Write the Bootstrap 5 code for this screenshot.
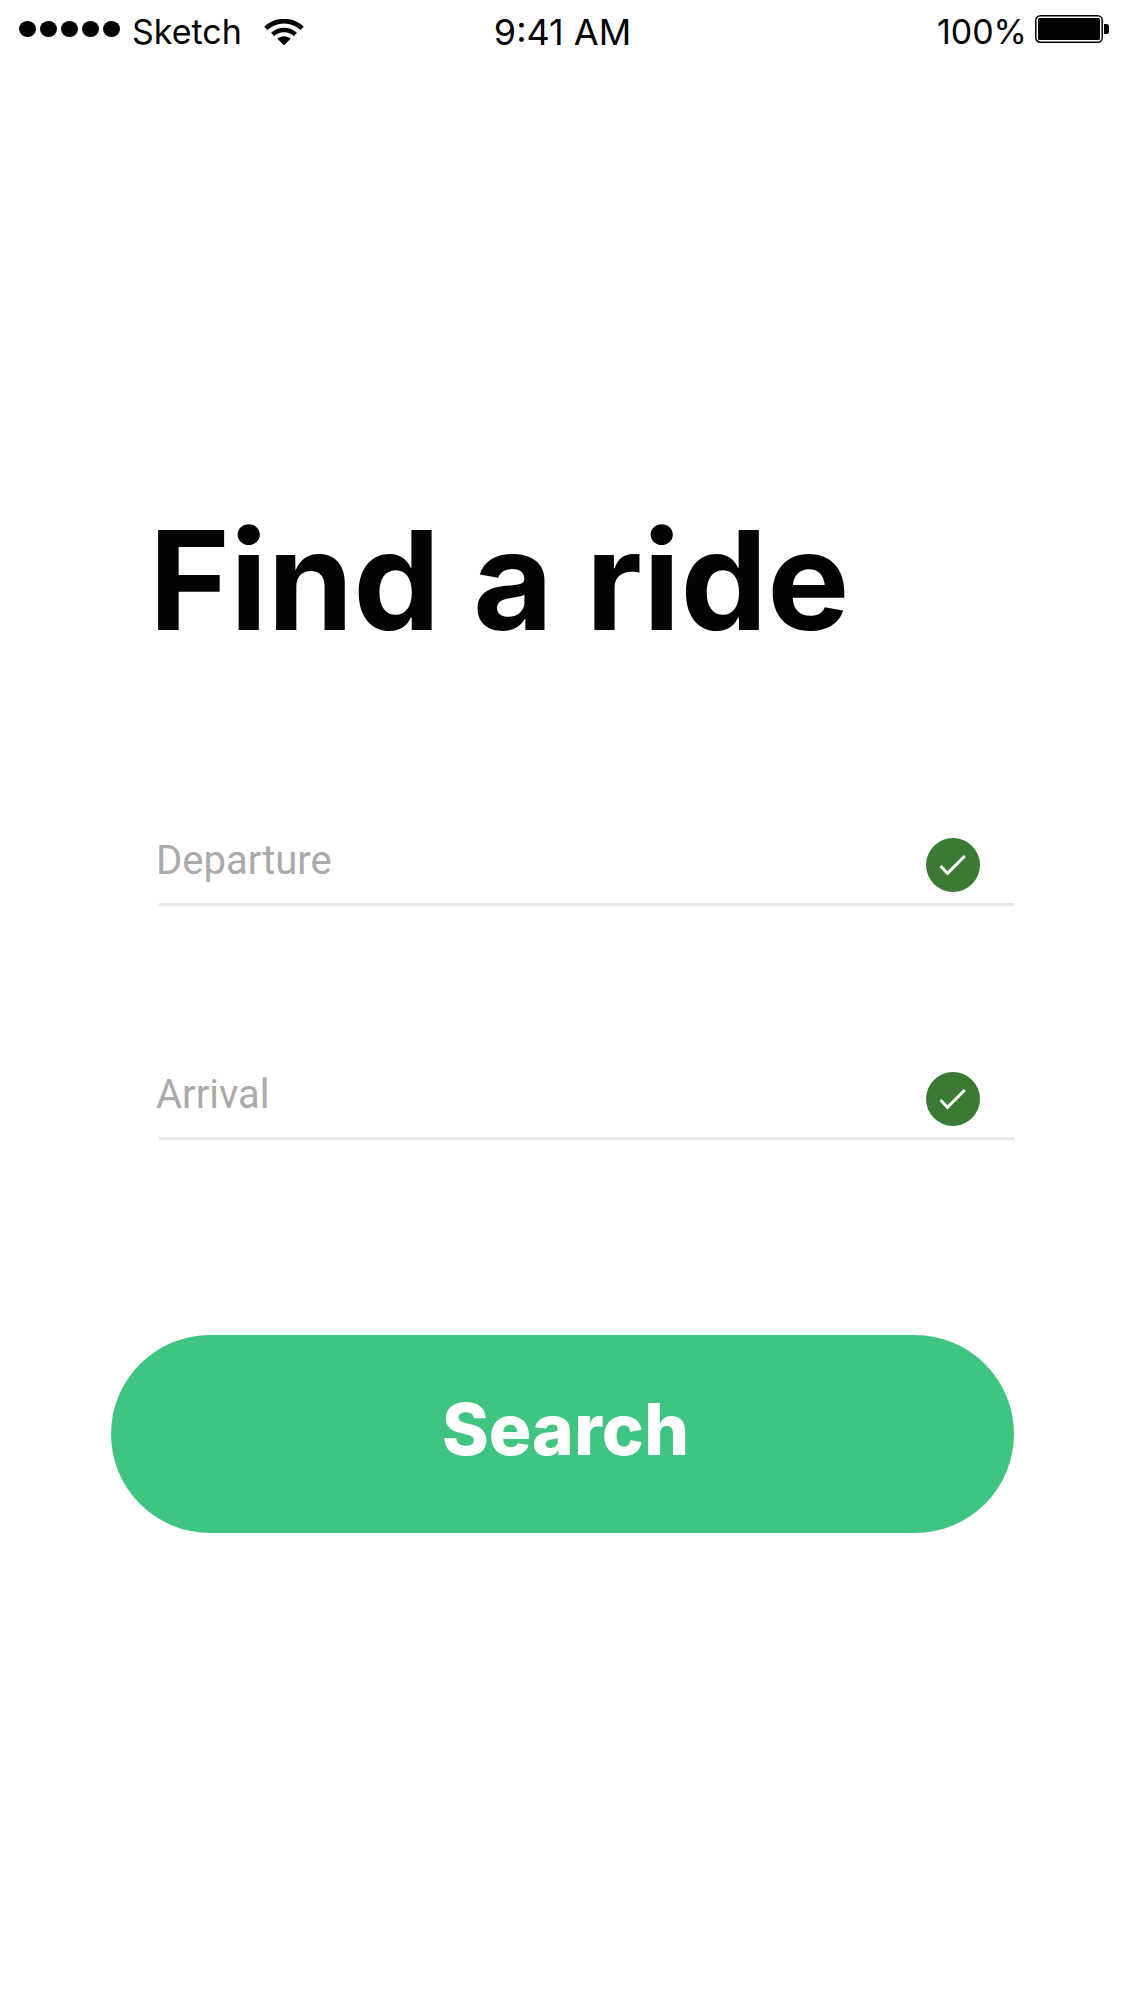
<!DOCTYPE html>
<html lang="en">
<head>
<meta charset="utf-8">
<meta name="viewport" content="width=device-width, initial-scale=1">
<title>Find a ride</title>
<link href="https://cdn.jsdelivr.net/npm/bootstrap@5.3.0/dist/css/bootstrap.min.css" rel="stylesheet">
<style>
  body { font-family: Inter, "Liberation Sans", sans-serif; color: #030303; background: #fff; }
  .status-bar { height: 64px; padding: 0 16px; font-size: 34px; line-height: 64px; }
  .status-time { font-size: 36px; }
  .signal-dots { gap: 4px; margin: 0 12px 6px 3px; }
  .signal-dot { width: 17px; height: 16px; border-radius: 50%; background: #030303; }
  .wifi-icon { margin-left: 22px; }
  .battery-icon { margin-bottom: 6px; }
  .ride-page { padding: 436px 111px 0; }
  .ride-title { padding-left: 38px; margin-bottom: 158px; font-size: 138px; line-height: 160px; font-weight: 700; }
  .ride-field { height: 88px; margin: 0 0 146px 48px; border-bottom: 3px solid #e7e7e7; }
  .ride-input, .ride-input:focus { height: 88px; margin-left: -3px; padding: 0; border: 0; border-radius: 0; box-shadow: none; background: transparent; font: 40px/48px Roboto, sans-serif; color: #333; }
  .ride-input::placeholder { color: #aaa; opacity: 1; }
  .check-icon { margin: 8px 34px 0 0; }
  .search-btn { height: 198px; margin-top: 49px; padding: 0 0 10px 6px; font-size: 71px; line-height: 80px; font-weight: 800; --bs-btn-bg: #40c482; --bs-btn-hover-bg: #37b375; --bs-btn-active-bg: #2fa369; --bs-btn-color: #fff; --bs-btn-hover-color: #fff; --bs-btn-active-color: #fff; --bs-btn-border-width: 0; }
</style>
</head>
<body>
<header class="status-bar d-flex align-items-center">
  <div class="d-flex align-items-center col">
    <div class="signal-dots d-flex" role="img" aria-label="Full signal">
      <span class="signal-dot"></span><span class="signal-dot"></span><span class="signal-dot"></span><span class="signal-dot"></span><span class="signal-dot"></span>
    </div>
    <span>Sketch</span>
    <svg class="wifi-icon" width="40" height="27" viewBox="0 0 40 27" role="img" aria-label="Wi-Fi">
      <g fill="none" stroke="#030303" stroke-width="4.600">
        <path d="M1.800 9.300C12-.3 28-.3 38.200 9.300"/>
        <path d="M8.600 15.500C15 9.400 25 9.400 31.400 15.500"/>
      </g>
      <path fill="#030303" d="M13.300 19.800C17 16.300 23 16.300 26.700 19.800L20 26.200z"/>
    </svg>
  </div>
  <div class="status-time text-center">9:41 AM</div>
  <div class="d-flex align-items-center justify-content-end gap-2 col">
    <span>100%</span>
    <svg class="battery-icon" width="74" height="28" viewBox="0 0 74 28" role="img" aria-label="Battery full">
      <rect x=".8" y=".8" width="66.400" height="26.400" rx="4.500" fill="#fff" stroke="#030303" stroke-width="1.500"/>
      <rect x="3" y="3" width="62" height="22" rx="1.500" fill="#030303"/>
      <path fill="#030303" d="M69 9h2.500q2.500 0 2.500 2.500v5q0 2.500-2.500 2.500H69z"/>
    </svg>
  </div>
</header>

<main class="ride-page">
  <h1 class="ride-title">Find a ride</h1>
  <form>
    <div class="ride-field d-flex align-items-center">
      <input class="ride-input form-control" type="text" placeholder="Departure" aria-label="Departure">
      <svg class="check-icon flex-shrink-0" width="54" height="54" viewBox="0 0 54 54" aria-hidden="true">
        <circle cx="27" cy="27" r="27" fill="#3a7a33"/>
        <path d="M14.500 28l7 7.300L38.800 18" fill="none" stroke="#fff" stroke-width="3"/>
      </svg>
    </div>
    <div class="ride-field d-flex align-items-center">
      <input class="ride-input form-control" type="text" placeholder="Arrival" aria-label="Arrival">
      <svg class="check-icon flex-shrink-0" width="54" height="54" viewBox="0 0 54 54" aria-hidden="true">
        <circle cx="27" cy="27" r="27" fill="#3a7a33"/>
        <path d="M14.500 28l7 7.300L38.800 18" fill="none" stroke="#fff" stroke-width="3"/>
      </svg>
    </div>
    <button class="search-btn btn rounded-pill w-100" type="submit">Search</button>
  </form>
</main>
<script src="https://cdn.jsdelivr.net/npm/bootstrap@5.3.0/dist/js/bootstrap.bundle.min.js"></script>
</body>
</html>
